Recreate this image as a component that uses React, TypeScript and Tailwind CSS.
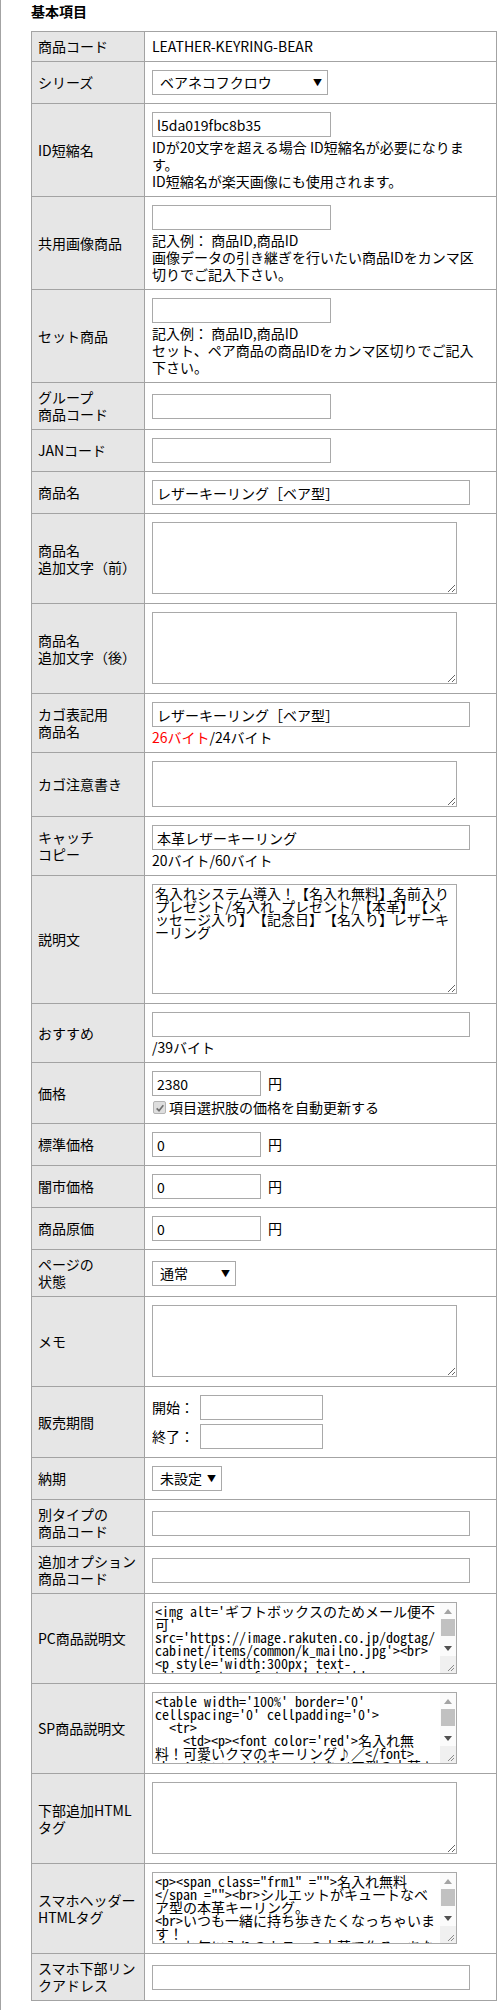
import type { ReactNode } from 'react';

const pcText = `<img alt='ギフトボックスのためメール便不可' src='https://image.rakuten.co.jp/dogtag/cabinet/items/common/k_mailno.jpg'><br>
<p style='width:300px; text-align:center; font-weight:bold; color:#CC0050;'>名入れ無料！</p>`;

const spText = `<table width='100%' border='0' cellspacing='0' cellpadding='0'>
  <tr>
    <td><p><font color='red'>名入れ無料！可愛いクマのキーリング♪／</font><br>シルエットがキュートなベア型の本革キーリング。</p></td>
  </tr>
</table>`;

const headerText = `<p><span class="frm1" ="">名入れ無料</span =""><br>シルエットがキュートなベア型の本革キーリング。
<br>いつも一緒に持ち歩きたくなっちゃいます！
<br>お気に入りのカラーの本革で作る、あなただけの特別なアイテム。</p>`;

const descText =
  '名入れシステム導入！【名入れ無料】名前入りプレゼント/名入れ プレゼント/【本革】【メッセージ入り】【記念日】【名入り】レザーキーリング';

function Row({ label, children, last }: { label: ReactNode; children?: ReactNode; last?: boolean }) {
  return (
    <div className={`grid grid-cols-[113px_1fr] ${last ? '' : 'border-b border-[#a3a3a3]'}`}>
      <div className="flex items-center border-r border-[#a3a3a3] bg-[#e6e6e6] px-[6px] py-[6px] leading-[17px]">
        <div>{label}</div>
      </div>
      <div className="flex flex-col items-start justify-center px-[7px] py-[6px] leading-[17px]">{children}</div>
    </div>
  );
}

function TextInput({ w, value = '' }: { w: string; value?: string }) {
  return (
    <input
      readOnly
      defaultValue={value}
      className={`my-[2px] block h-[25px] ${w} border border-[#a9a9a9] bg-white px-[4px] text-[14px] text-black outline-none`}
    />
  );
}

function Select({ w, value }: { w: string; value: string }) {
  return (
    <div
      className={`my-[2px] flex h-[25px] ${w} items-center justify-between border border-[#a9a9a9] bg-white pl-[7px] pr-[5px] text-[14px]`}
    >
      <span>{value}</span>
      <span className="text-[9px] leading-none">▼</span>
    </div>
  );
}

function Grip({ color }: { color: string }) {
  return (
    <svg viewBox="0 0 10 10" className="h-[10px] w-[10px]">
      <path d="M9 3 L3 9 M9 6 L6 9" stroke={color} strokeWidth="1" fill="none" />
    </svg>
  );
}

// fake classic scrollbar, drawn over the textarea's right edge
function ScrollBar() {
  return (
    <div className="absolute top-[1px] right-[1px] bottom-[1px] flex w-[16px] flex-col bg-[#fbfbfb]">
      <div className="flex h-[16px] items-center justify-center">
        <svg viewBox="0 0 8 5" className="h-[5px] w-[8px]">
          <path d="M0 5 L4 0 L8 5 Z" fill="#a3a3a3" />
        </svg>
      </div>
      <div className="mx-[1px] h-[17px] bg-[#c1c1c1]" />
      <div className="flex-1" />
      <div className="flex h-[16px] items-center justify-center">
        <svg viewBox="0 0 8 5" className="h-[5px] w-[8px]">
          <path d="M0 0 L8 0 L4 5 Z" fill="#505050" />
        </svg>
      </div>
      <div className="flex h-[17px] items-end justify-end bg-[#f0f0f0] pr-[1px] pb-[1px]">
        <Grip color="#8a8a8a" />
      </div>
    </div>
  );
}

function Area({ h, value = '', scroll }: { h: string; value?: string; scroll?: boolean }) {
  return (
    <div className={`relative mt-[2px] mb-[3px] w-[305px] ${h}`}>
      <textarea
        readOnly
        defaultValue={value}
        className={`block h-full w-full border border-[#a9a9a9] bg-white p-[2px] font-['Noto_Sans_Mono_CJK_JP','Liberation_Mono',monospace] text-[14px] leading-[13px] text-black outline-none ${
          scroll ? 'resize-none overflow-hidden pr-[18px]' : ''
        }`}
      />
      {scroll && <ScrollBar />}
    </div>
  );
}

function Yen({ value }: { value: string }) {
  return (
    <div className="flex items-center">
      <TextInput w="w-[109px]" value={value} />
      <span className="ml-[7px]">円</span>
    </div>
  );
}

export default function App() {
  return (
    <div className="min-h-[2010px] border-l border-[#a3a3a3] bg-white pl-[30px] font-['Noto_Sans_CJK_JP','Noto_Sans',sans-serif] text-[14px] text-black [text-spacing-trim:space-all]">
      <div className="pt-[3px] text-[14px] font-bold leading-[17px]">基本項目</div>

      <div className="mt-[11px] w-[466px] border border-[#a3a3a3]">
        <Row label="商品コード">
          <div>LEATHER-KEYRING-BEAR</div>
        </Row>
        <Row label="シリーズ">
          <Select w="w-[176px]" value="ベアネコフクロウ" />
        </Row>
        <Row label="ID短縮名">
          <TextInput w="w-[179px]" value="l5da019fbc8b35" />
          <div>
            IDが20文字を超える場合 ID短縮名が必要になりま
            <br />
            す。
            <br />
            ID短縮名が楽天画像にも使用されます。
          </div>
        </Row>
        <Row label="共用画像商品">
          <TextInput w="w-[179px]" />
          <div>
            記入例： 商品ID,商品ID
            <br />
            画像データの引き継ぎを行いたい商品IDをカンマ区
            <br />
            切りでご記入下さい。
          </div>
        </Row>
        <Row label="セット商品">
          <TextInput w="w-[179px]" />
          <div>
            記入例： 商品ID,商品ID
            <br />
            セット、ペア商品の商品IDをカンマ区切りでご記入
            <br />
            下さい。
          </div>
        </Row>
        <Row
          label={
            <>
              グループ
              <br />
              商品コード
            </>
          }
        >
          <TextInput w="w-[179px]" />
        </Row>
        <Row label="JANコード">
          <TextInput w="w-[179px]" />
        </Row>
        <Row label="商品名">
          <TextInput w="w-[318px]" value="レザーキーリング［ベア型］" />
        </Row>
        <Row
          label={
            <>
              商品名
              <br />
              追加文字（前）
            </>
          }
        >
          <Area h="h-[72px]" />
        </Row>
        <Row
          label={
            <>
              商品名
              <br />
              追加文字（後）
            </>
          }
        >
          <Area h="h-[72px]" />
        </Row>
        <Row
          label={
            <>
              カゴ表記用
              <br />
              商品名
            </>
          }
        >
          <TextInput w="w-[318px]" value="レザーキーリング［ベア型］" />
          <div>
            <span className="text-[#ff0000]">26バイト</span>/24バイト
          </div>
        </Row>
        <Row label="カゴ注意書き">
          <Area h="h-[46px]" />
        </Row>
        <Row
          label={
            <>
              キャッチ
              <br />
              コピー
            </>
          }
        >
          <TextInput w="w-[318px]" value="本革レザーキーリング" />
          <div>20バイト/60バイト</div>
        </Row>
        <Row label="説明文">
          <Area h="h-[110px]" value={descText} />
        </Row>
        <Row label="おすすめ">
          <TextInput w="w-[318px]" />
          <div>/39バイト</div>
        </Row>
        <Row label="価格">
          <Yen value="2380" />
          <div className="flex h-[19px] items-center">
            <span className="ml-[1px] mr-[3px] flex h-[13px] w-[13px] items-center justify-center rounded-[2px] border border-[#b5b5b5] bg-[#dedede]">
              <svg viewBox="0 0 12 12" className="h-[10px] w-[10px]">
                <path d="M2 6.5 L4.8 9.2 L10 2.8" fill="none" stroke="#6f6f6f" strokeWidth="2" />
              </svg>
            </span>
            <span>項目選択肢の価格を自動更新する</span>
          </div>
        </Row>
        <Row label="標準価格">
          <Yen value="0" />
        </Row>
        <Row label="闇市価格">
          <Yen value="0" />
        </Row>
        <Row label="商品原価">
          <Yen value="0" />
        </Row>
        <Row
          label={
            <>
              ページの
              <br />
              状態
            </>
          }
        >
          <Select w="w-[84px]" value="通常" />
        </Row>
        <Row label="メモ">
          <Area h="h-[72px]" />
        </Row>
        <Row label="販売期間">
          <div className="flex items-center gap-[6px]">
            <span>開始：</span>
            <TextInput w="w-[123px]" />
          </div>
          <div className="flex items-center gap-[6px]">
            <span>終了：</span>
            <TextInput w="w-[123px]" />
          </div>
        </Row>
        <Row label="納期">
          <Select w="w-[70px]" value="未設定" />
        </Row>
        <Row
          label={
            <>
              別タイプの
              <br />
              商品コード
            </>
          }
        >
          <TextInput w="w-[318px]" />
        </Row>
        <Row
          label={
            <>
              追加オプション
              <br />
              商品コード
            </>
          }
        >
          <TextInput w="w-[318px]" />
        </Row>
        <Row label="PC商品説明文">
          <Area h="h-[72px]" value={pcText} scroll />
        </Row>
        <Row label="SP商品説明文">
          <Area h="h-[72px]" value={spText} scroll />
        </Row>
        <Row
          label={
            <>
              下部追加HTML
              <br />
              タグ
            </>
          }
        >
          <Area h="h-[72px]" />
        </Row>
        <Row
          label={
            <>
              スマホヘッダー
              <br />
              HTMLタグ
            </>
          }
        >
          <Area h="h-[72px]" value={headerText} scroll />
        </Row>
        <Row
          last
          label={
            <>
              スマホ下部リン
              <br />
              クアドレス
            </>
          }
        >
          <TextInput w="w-[318px]" />
        </Row>
      </div>
    </div>
  );
}
